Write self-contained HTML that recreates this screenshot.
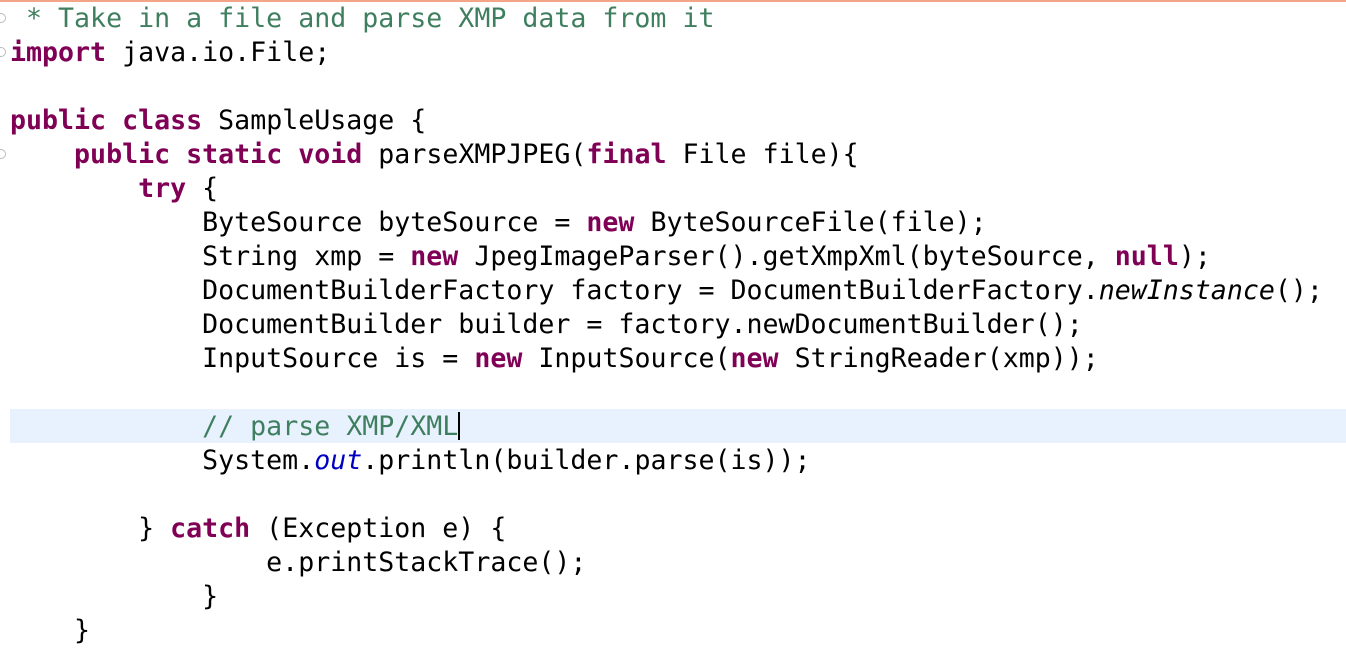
<!DOCTYPE html>
<html><head><meta charset="utf-8"><style>
html,body{margin:0;padding:0;background:#fff;width:1346px;height:652px;overflow:hidden}
.top{position:absolute;left:0;top:0;width:1346px;height:2px;background:#f2a587}
.hl{position:absolute;left:10px;top:409px;width:1336px;height:34px;background:#e8f2fe}
pre{position:absolute;left:10px;top:2px;margin:0;font-family:"DejaVu Sans Mono","Liberation Mono",monospace;font-size:26.6px;line-height:34px;color:#000;white-space:pre}
.k{color:#7f0055;font-weight:bold}
.c{color:#3f7f5f}
.o{color:#0000c0;font-style:italic}
.i{font-style:italic}
.cur{display:inline-block;width:2px;height:28px;background:#000;vertical-align:-5px}
.g{position:absolute;left:-4px;width:8px;height:8px;border-radius:50%;border:1px solid #bbb}
</style></head><body>
<div class="top"></div>
<div class="hl"></div>
<div class="g" style="top:13px"></div>
<div class="g" style="top:47px"></div>
<div class="g" style="top:149px"></div>
<pre><span class="c"> * Take in a file and parse XMP data from it</span>
<span class="k">import</span> java.io.File;

<span class="k">public</span> <span class="k">class</span> SampleUsage {
    <span class="k">public</span> <span class="k">static</span> <span class="k">void</span> parseXMPJPEG(<span class="k">final</span> File file){
        <span class="k">try</span> {
            ByteSource byteSource = <span class="k">new</span> ByteSourceFile(file);
            String xmp = <span class="k">new</span> JpegImageParser().getXmpXml(byteSource, <span class="k">null</span>);
            DocumentBuilderFactory factory = DocumentBuilderFactory.<span class="i">newInstance</span>();
            DocumentBuilder builder = factory.newDocumentBuilder();
            InputSource is = <span class="k">new</span> InputSource(<span class="k">new</span> StringReader(xmp));

            <span class="c">// parse XMP/XML</span><span class="cur"></span>
            System.<span class="o">out</span>.println(builder.parse(is));

        } <span class="k">catch</span> (Exception e) {
                e.printStackTrace();
            }
    }</pre>
</body></html>
